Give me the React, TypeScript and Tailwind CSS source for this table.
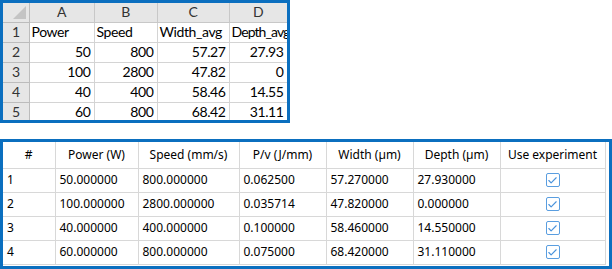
import { Check } from "lucide-react";

const sheetRows = [
  { n: 1, a: "Power", b: "Speed", c: "Width_avg", d: "Depth_avg", text: true },
  { n: 2, a: "50", b: "800", c: "57.27", d: "27.93" },
  { n: 3, a: "100", b: "2800", c: "47.82", d: "0" },
  { n: 4, a: "40", b: "400", c: "58.46", d: "14.55" },
  { n: 5, a: "60", b: "800", c: "68.42", d: "31.11" },
];

const tableRows = [
  ["1", "50.000000", "800.000000", "0.062500", "57.270000", "27.930000"],
  ["2", "100.000000", "2800.000000", "0.035714", "47.820000", "0.000000"],
  ["3", "40.000000", "400.000000", "0.100000", "58.460000", "14.550000"],
  ["4", "60.000000", "800.000000", "0.075000", "68.420000", "31.110000"],
];

const headers = ["#", "Power (W)", "Speed (mm/s)", "P/v (J/mm)", "Width (µm)", "Depth (µm)", "Use experiment"];
const colWidths = [52, 83, 101, 87, 87, 87, 105];

function Sheet() {
  return (
    <div className="w-[290px] h-[123px] border-[3px] border-[#0b6fbf] overflow-hidden bg-white">
      <table
        className="table-fixed border-collapse text-[14px] tracking-[-0.4px] text-black"
        style={{ fontFamily: "Lato, 'Liberation Sans', sans-serif", width: 284 }}
      >
        <colgroup>
          <col style={{ width: 26 }} />
          <col style={{ width: 65 }} />
          <col style={{ width: 63 }} />
          <col style={{ width: 72 }} />
          <col style={{ width: 58 }} />
        </colgroup>
        <thead>
          <tr className="h-[19px] bg-[#e6e6e6] text-[#333]">
            <th className="relative border-r border-b border-[#bcbcbc] p-0">
              <svg className="absolute right-[3px] bottom-[3px]" width="13" height="13" viewBox="0 0 13 13">
                <polygon points="13,0 13,13 0,13" fill="#c4c4c4" />
              </svg>
            </th>
            {["A", "B", "C", "D"].map((l) => (
              <th key={l} className="font-normal border-r border-b border-[#c8c8c8] p-0 leading-none">
                {l}
              </th>
            ))}
          </tr>
        </thead>
        <tbody>
          {sheetRows.map((r) => (
            <tr key={r.n} className="h-[20px]">
              <td className="bg-[#e6e6e6] text-[#333] text-center border-r border-b border-[#bcbcbc] p-0 leading-none">
                {r.n}
              </td>
              {[r.a, r.b, r.c, r.d].map((v, i) => (
                <td
                  key={i}
                  className={`border-r border-b border-[#d4d4d4] py-0 leading-none whitespace-nowrap ${
                    r.text ? "text-left pl-[2px] pr-0" : "text-right px-[3px]"
                  } ${r.text && i === 3 ? "tracking-[-0.9px]" : ""}`}
                >
                  {v}
                </td>
              ))}
            </tr>
          ))}
        </tbody>
      </table>
    </div>
  );
}

function Box() {
  return (
    <span className="inline-flex w-[14px] h-[14px] items-center justify-center rounded-[2px] border border-[#5a9ee0] bg-white">
      <Check className="w-[11px] h-[11px] text-[#4a93dc]" strokeWidth={2.5} />
    </span>
  );
}

function ExperimentTable() {
  return (
    <div className="w-[612px] h-[130px] border-[3px] border-[#0b6fbf] overflow-hidden bg-white">
      <table
        className="table-fixed border-collapse text-[12px] text-black"
        style={{ fontFamily: "'Noto Sans', 'Open Sans', sans-serif", width: 602 }}
      >
        <colgroup>
          {colWidths.map((w, i) => (
            <col key={i} style={{ width: w }} />
          ))}
        </colgroup>
        <thead>
          <tr className="h-[26px]">
            {headers.map((h) => (
              <th key={h} className="font-normal text-center border-r border-b border-[#d8d8d8] p-0 whitespace-nowrap">
                {h}
              </th>
            ))}
          </tr>
        </thead>
        <tbody>
          {tableRows.map((r) => (
            <tr key={r[0]} className="h-[24px]">
              {r.map((v, i) => (
                <td key={i} className="border-r border-b border-[#d8d8d8] px-[4px] py-0 whitespace-nowrap">
                  {v}
                </td>
              ))}
              <td className="border-r border-b border-[#d8d8d8] p-0 text-center">
                <div className="flex justify-center">
                  <Box />
                </div>
              </td>
            </tr>
          ))}
        </tbody>
      </table>
    </div>
  );
}

export default function App() {
  return (
    <div className="w-[612px] h-[269px] bg-white flex flex-col gap-[16px]">
      <Sheet />
      <ExperimentTable />
    </div>
  );
}
